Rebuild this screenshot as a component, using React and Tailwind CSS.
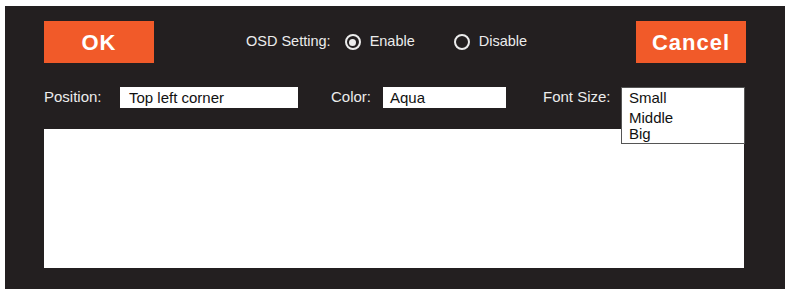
export default function App() {
  return (
    <div className="w-[791px] h-[293px] bg-white pt-[6px] pl-[5px] font-['Liberation_Sans',Arial,sans-serif]">
      <div className="w-[780px] h-[283px] bg-[#231f20] pt-[15px] pl-[39px] text-[#ececec]">
        {/* top row */}
        <div className="flex items-center w-[702px] h-[42px]">
          <button className="w-[110px] h-[42px] bg-[#f15a29] text-white text-[22px] font-bold tracking-[1px]">OK</button>
          <div className="flex items-center ml-[92px] text-[14.5px]">
            <span>OSD Setting:</span>
            <span className="ml-[14px] w-[16px] h-[16px] rounded-full border-2 border-[#ececec] flex items-center justify-center">
              <span className="w-[7px] h-[7px] rounded-full bg-[#ececec]" />
            </span>
            <span className="ml-[9px]">Enable</span>
            <span className="ml-[39px] w-[16px] h-[16px] rounded-full border-2 border-[#ececec]" />
            <span className="ml-[9px]">Disable</span>
          </div>
          <button className="ml-auto w-[110px] h-[42px] bg-[#f15a29] text-white text-[22px] font-bold tracking-[1px]">Cancel</button>
        </div>

        {/* settings row */}
        <div className="flex items-center h-[21px] mt-[24px] text-[15px]">
          <span className="w-[76px]">Position:</span>
          <div className="w-[178px] h-[21px] bg-white text-[#111] pl-[9px] leading-[21px]">Top left corner</div>
          <span className="ml-[33px] w-[52px]">Color:</span>
          <div className="w-[123px] h-[21px] bg-white text-[#111] pl-[7px] leading-[21px]">Aqua</div>
          <span className="ml-[37px] w-[78px]">Font Size:</span>
          <div className="relative w-[124px] h-[21px]">
            <div className="absolute left-0 top-0 z-10 w-[124px] h-[57px] bg-white border border-[#555] text-[#111] pl-[7px] text-[15px] leading-[16px]">
              <div className="mt-[2px]">Small</div>
              <div className="mt-[4px]">Middle</div>
              <div>Big</div>
            </div>
          </div>
        </div>

        {/* preview area */}
        <div className="mt-[21px] w-[700px] h-[139px] bg-white" />
      </div>
    </div>
  );
}
